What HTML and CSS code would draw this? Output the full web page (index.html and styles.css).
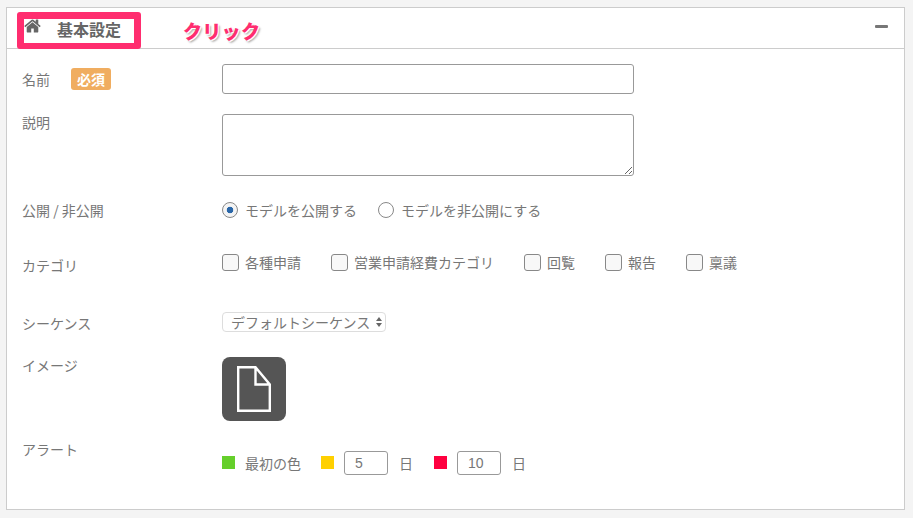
FILE: index.html
```html
<!DOCTYPE html>
<html lang="ja">
<head>
<meta charset="utf-8">
<title>基本設定</title>
<link rel="stylesheet" href="styles.css">
</head>
<body>
<section class="panel">
  <header class="panel-head">
    <svg class="home" viewBox="0 0 1664 1792" aria-hidden="true"><path d="M1408 992v480q0 26-19 45t-45 19h-384v-384h-256v384h-384q-26 0-45-19t-19-45v-480q0-1 .5-3t.5-3l575-474 575 474q1 2 1 6zm223-69l-62 74q-8 9-21 11h-3q-13 0-21-7l-692-577-692 577q-12 8-24 7-13-2-21-11l-62-74q-8-10-7-23.5t11-21.5l719-599q32-26 76-26t76 26l244 204v-195q0-14 9-23t23-9h192q14 0 23 9t9 23v408l219 182q10 8 11 21.5t-7 23.5z"/></svg>
    <h2 class="panel-title">基本設定</h2>
    <span class="collapse"></span>
  </header>
  <div class="callout"></div>
  <div class="callout-text">クリック</div>
  <form class="panel-body">
    <div class="row row-name">
      <div class="label label-name">名前<span class="badge">必須</span></div>
      <input class="field field-wide" type="text">
    </div>
    <div class="row row-desc">
      <div class="label">説明</div>
      <textarea class="field field-wide area"></textarea>
    </div>
    <div class="row row-public">
      <div class="label">公開 / 非公開</div>
      <div class="options options-radio">
        <label class="opt"><input class="radio" type="radio" name="pub" checked>モデルを公開する</label>
        <label class="opt"><input class="radio" type="radio" name="pub">モデルを非公開にする</label>
      </div>
    </div>
    <div class="row row-cat">
      <div class="label">カテゴリ</div>
      <div class="options options-check">
        <label class="opt"><input class="check" type="checkbox">各種申請</label>
        <label class="opt"><input class="check" type="checkbox">営業申請経費カテゴリ</label>
        <label class="opt"><input class="check" type="checkbox">回覧</label>
        <label class="opt"><input class="check" type="checkbox">報告</label>
        <label class="opt"><input class="check" type="checkbox">稟議</label>
      </div>
    </div>
    <div class="row row-seq">
      <div class="label">シーケンス</div>
      <div class="select-wrap">
        <select class="select"><option>デフォルトシーケンス</option></select>
      </div>
    </div>
    <div class="row row-image">
      <div class="label">イメージ</div>
      <div class="tile">
        <svg class="file" viewBox="0 0 34 46" aria-hidden="true"><path d="M1.2 1.2H18.5L32.8 18.5V44.8H1.2Z M18.5 1.2V18.5H32.8"/></svg>
      </div>
    </div>
    <div class="row row-alert">
      <div class="label">アラート</div>
      <div class="alert">
        <span class="swatch green"></span><span class="alert-first">最初の色</span>
        <span class="swatch yellow"></span><input class="num" type="text" value="5"><span class="day">日</span>
        <span class="swatch red"></span><input class="num" type="text" value="10"><span class="day">日</span>
      </div>
    </div>
  </form>
</section>
</body>
</html>
```

FILE: styles.css
```css
* { box-sizing: border-box; }
html, body { height: 100%; }
body {
  margin: 0;
  padding: 7px 8px 8px 6px;
  background: #f4f4f4;
  color: #777;
  font: 14px/20px "Noto Sans CJK JP", "Liberation Sans", sans-serif;
  overflow: hidden;
}
.panel {
  position: relative;
  height: 503px;
  background: #fff;
  border: 1px solid #ccc;
}
.panel-head {
  display: flex;
  align-items: center;
  height: 41px;
  padding: 0 16px 0 17px;
  border-bottom: 1px solid #ccc;
}
.home { width: 17px; height: 18px; fill: #666; margin-top: -4px; }
.panel-title {
  margin: 0 0 0 16px;
  font-size: 16px;
  font-weight: 700;
  color: #666;
  margin-top: 1px;
}
.collapse {
  margin-left: auto;
  margin-top: -3px;
  width: 13px;
  height: 3px;
  border-radius: 1px;
  background: #777;
}
.callout {
  position: absolute;
  left: 10px;
  top: 4px;
  width: 124px;
  height: 37px;
  border: solid #ff2d6f;
  border-width: 7px 7px 6px;
  border-radius: 3px;
}
.callout-text {
  position: absolute;
  left: 176px;
  top: 9px;
  font-size: 19px;
  line-height: 28px;
  font-weight: 900;
  letter-spacing: 0.3px;
  color: #ff2d6f;
  text-shadow: 1px 1px 0 #fff, 2px 2px 2px #aaa;
}
.panel-body { padding: 15px 0 0 15px; }
.row { display: flex; align-items: flex-start; }
.label { flex: 0 0 200px; }
.label-name { display: flex; align-items: center; height: 30px; }
.badge {
  margin-left: 21px;
  width: 40px;
  height: 22px;
  border-radius: 3px;
  background: #f0ad60;
  color: #fff;
  font-weight: 700;
  line-height: 22px;
  text-align: center;
}
.field {
  display: block;
  width: 412px;
  border: 1px solid #999;
  border-radius: 3px;
  background: #fff;
  outline: none;
}
.field-wide { height: 30px; }
.area { height: 62px; resize: both; margin-top: 2px; }
.row-desc { margin-top: 18px; }
.row-public { margin-top: 24px; }
.options { display: flex; }
.options-radio { gap: 21px; }
.options-check { gap: 30px; margin-top: -3px; }
.opt { display: flex; align-items: center; gap: 6px; white-space: nowrap; height: 20px; }
.radio, .check {
  appearance: none;
  margin: 0;
  flex: none;
  border: 1px solid #888;
  background: #fff;
}
.radio { width: 16px; height: 16px; border-radius: 50%; margin-right: 1px; position: relative; }
.radio:checked {
  background: radial-gradient(circle, #2a66a8 0 3px, #f4f4f4 3.6px);
}
.check { width: 17px; height: 17px; border-radius: 3px; background: #f8f8f8; }
.options-check .opt { height: 20px; }
.row-cat { margin-top: 35px; }
.row-cat .label { padding-top: 0; }
.row-seq { margin-top: 38px; }
.select-wrap { position: relative; margin-top: -1px; }
.select-wrap::before,
.select-wrap::after {
  content: "";
  position: absolute;
  right: 4px;
  border-left: 3px solid transparent;
  border-right: 3px solid transparent;
}
.select-wrap::before { top: 5px; border-bottom: 4px solid #666; }
.select-wrap::after { top: 11px; border-top: 4px solid #666; }
.select {
  appearance: none;
  display: block;
  width: 164px;
  height: 20px;
  padding: 0 0 0 8px;
  border: 1px solid #ddd;
  border-radius: 4px;
  background: #fff;
  color: #777;
  font: 14px/18px "Noto Sans CJK JP", sans-serif;
  outline: none;
}
.row-image { margin-top: 22px; }
.tile {
  display: flex;
  align-items: center;
  justify-content: center;
  width: 64px;
  height: 64px;
  margin-top: 2px;
  border-radius: 8px;
  background: #555;
}
.file { width: 34px; height: 46px; fill: none; stroke: #fff; stroke-width: 2.4; }
.row-alert { margin-top: 18px; }
.alert { display: flex; align-items: center; height: 24px; margin-top: 12px; }
.swatch { flex: none; width: 13px; height: 13px; margin-top: -1px; margin-right: 10px; }
.green { background: #65cf2b; }
.yellow { background: #ffd000; }
.red { background: #ff0040; }
.alert-first { margin-right: 20px; }
.num {
  width: 44px;
  height: 24px;
  padding: 0 0 0 10px;
  border: 1px solid #999;
  border-radius: 3px;
  color: #777;
  font: 14px "Liberation Sans", sans-serif;
  outline: none;
}
.day { margin-left: 11px; margin-right: 21px; color: #777; }
```
